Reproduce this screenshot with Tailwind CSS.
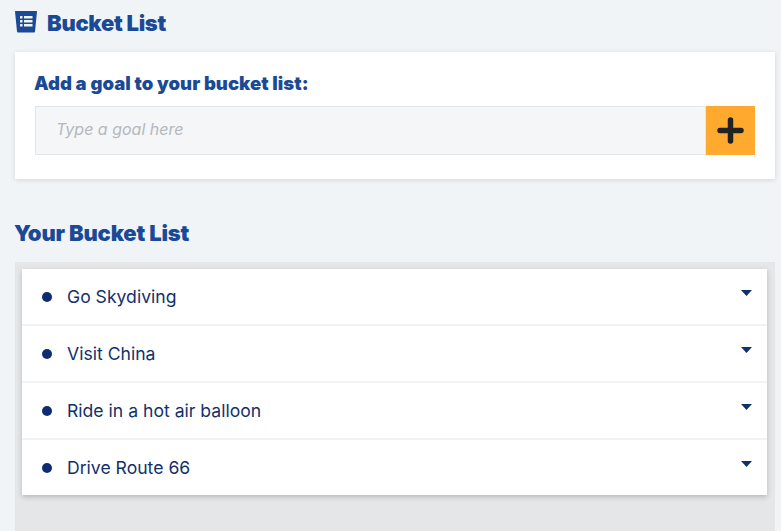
<!DOCTYPE html>
<html lang="en">
  <head>
    <title>Bucket List</title>
    <script src="https://cdn.jsdelivr.net/npm/@tailwindcss/browser@4"></script>
  </head>
  <body>
    <div class="h-[531px] overflow-hidden bg-[#f1f4f7] pl-[15px] pr-[6px] font-['Inter',sans-serif]">
      <!-- Header -->
      <div class="flex h-[52px] items-center gap-[10px] pb-[6px]">
        <svg class="mb-[2px] h-[22px] w-[22px]" viewBox="0 0 22 22">
          <path d="M0.5 0H21.5Q22 0 22 0.5L20 20.5Q20 21.5 19 21.5H3Q2 21.5 2 20.5L0 0.5Q0 0 0.5 0Z" fill="#1a4a96" />
          <g fill="#f1f4f7">
            <rect x="5" y="5" width="2.5" height="2.5" rx="0.6" />
            <rect x="9" y="5" width="8.5" height="2.5" />
            <rect x="5" y="9" width="2.5" height="2.5" rx="0.6" />
            <rect x="9" y="9" width="8.5" height="2.5" />
            <rect x="5" y="13" width="2.5" height="2.5" rx="0.6" />
            <rect x="9" y="13" width="8.5" height="2.5" />
          </g>
        </svg>
        <h1 class="text-[22px] font-black tracking-[-0.3px] text-[#1a4a96]">Bucket List</h1>
      </div>
      <!-- Add goal card -->
      <div class="h-[127px] bg-white px-5 pt-[19px] shadow-[0_1px_5px_rgba(0,0,0,0.12)]">
        <label class="-ml-px block h-[35px] text-[18.5px] leading-[24px] font-black tracking-[0.03px] text-[#1a4a96]">Add a goal to your bucket list:</label>
        <div class="flex h-[49px]">
          <div class="flex flex-1 items-center border border-[#e3e6ea] bg-[#f4f6f8] pb-[3px] pl-5 text-[16px] text-[#b5b8bc] italic">Type a goal here</div>
          <button class="flex w-[49px] items-center justify-center bg-[#ffa92e]">
            <svg class="h-[27px] w-[27px]" viewBox="0 0 27 27">
              <path d="M13.5 3V24M3 13.5H24" stroke="#222" stroke-width="5.5" stroke-linecap="round" />
            </svg>
          </button>
        </div>
      </div>
      <h2 class="mt-[41px] mb-[16px] -ml-px h-[26px] text-[22px] leading-[26px] font-black tracking-[-0.2px] text-[#1a4a96]">Your Bucket List</h2>
      <!-- List -->
      <div class="h-[280px] bg-[#e4e6e8] pt-[7px] pr-[8px] pl-[7px]">
        <ul class="bg-white text-[17.6px] text-[#12306b] shadow-[0_2px_5px_rgba(0,0,0,0.2)]">
          <li class="flex h-[57px] items-center border-b-2 border-[#f2f3f5] pl-5">
            <span class="mr-[15px] h-[10px] w-[10px] rounded-full bg-[#0f2c70]"></span>
            <span class="flex-1 pt-[1px]">Go Skydiving</span>
            <svg class="mr-[15px] mb-[8px] h-[6px] w-[11px]" viewBox="0 0 11 6"><path d="M0 0H11L5.5 6Z" fill="#12306b" /></svg>
          </li>
          <li class="flex h-[57px] items-center border-b-2 border-[#f2f3f5] pl-5">
            <span class="mr-[15px] h-[10px] w-[10px] rounded-full bg-[#0f2c70]"></span>
            <span class="flex-1 pt-[1px]">Visit China</span>
            <svg class="mr-[15px] mb-[8px] h-[6px] w-[11px]" viewBox="0 0 11 6"><path d="M0 0H11L5.5 6Z" fill="#12306b" /></svg>
          </li>
          <li class="flex h-[57px] items-center border-b-2 border-[#f2f3f5] pl-5">
            <span class="mr-[15px] h-[10px] w-[10px] rounded-full bg-[#0f2c70]"></span>
            <span class="flex-1 pt-[1px]">Ride in a hot air balloon</span>
            <svg class="mr-[15px] mb-[8px] h-[6px] w-[11px]" viewBox="0 0 11 6"><path d="M0 0H11L5.5 6Z" fill="#12306b" /></svg>
          </li>
          <li class="flex h-[55px] items-center pl-5">
            <span class="mr-[15px] h-[10px] w-[10px] rounded-full bg-[#0f2c70]"></span>
            <span class="flex-1 pt-[1px]">Drive Route 66</span>
            <svg class="mr-[15px] mb-[8px] h-[6px] w-[11px]" viewBox="0 0 11 6"><path d="M0 0H11L5.5 6Z" fill="#12306b" /></svg>
          </li>
        </ul>
      </div>
    </div>
  </body>
</html>
